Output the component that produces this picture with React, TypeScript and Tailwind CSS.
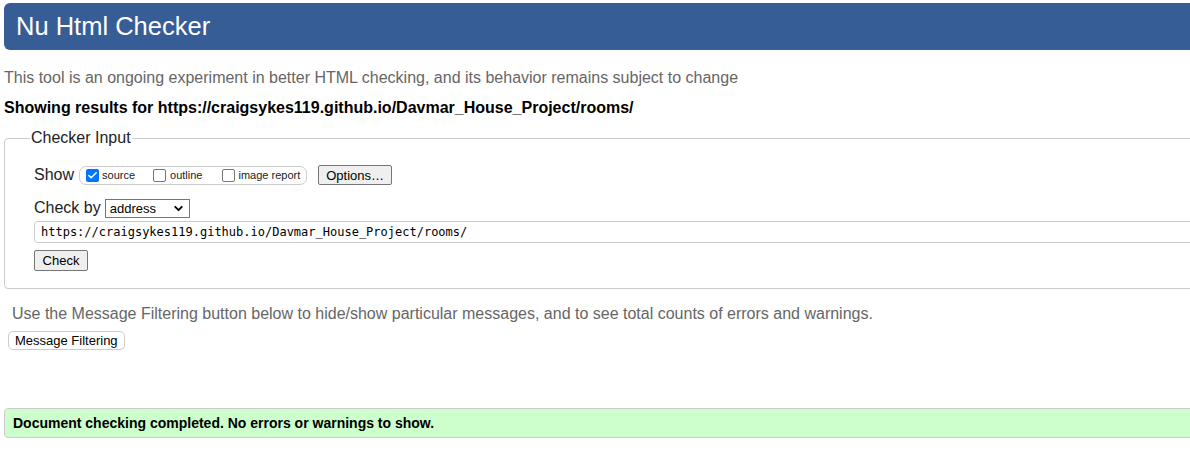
import { Check, ChevronDown } from 'lucide-react';

const FONT = "font-['Liberation_Sans',Arial,sans-serif]";

export default function App() {
  return (
    <div className={`h-[449px] w-full overflow-hidden bg-white ${FONT}`}>
      <div className="w-[1240px] px-[4px] pt-[3px]">
        {/* Header */}
        <div className="flex h-[47px] items-center rounded-l-[6px] bg-[#365d95] pl-[12px]">
          <h1 className="text-[25.5px] leading-none text-white">Nu Html Checker</h1>
        </div>

        <p className="mt-[18px] text-[16px] leading-[20px] text-[#666]">
          This tool is an ongoing experiment in better HTML checking, and its behavior remains subject to change
        </p>
        <p className="mt-[10px] text-[16px] font-bold leading-[20px] text-black">
          Showing results for https://craigsykes119.github.io/Davmar_House_Project/rooms/
        </p>

        {/* Checker Input */}
        <fieldset className="mt-[10px] rounded-l-[4px] border border-[#ccc] pb-[16px] pl-[29px] pt-[17px]">
          <legend className="-ml-[4px] px-[1px] text-[16px] leading-[20px] text-[#222]">Checker Input</legend>

          <div className="flex items-center">
            <span className="text-[16px] leading-[20px] text-[#222]">Show</span>
            <div className="ml-[5px] flex h-[19px] items-center rounded-[7px] border border-[#ccc] pl-[6px] pr-[6px]">
              <Box checked />
              <span className="ml-[3px] text-[11px] leading-none text-[#222]">source</span>
              <span className="ml-[18px]" />
              <Box />
              <span className="ml-[4px] text-[11px] leading-none text-[#222]">outline</span>
              <span className="ml-[20px]" />
              <Box />
              <span className="ml-[3px] text-[11px] leading-none text-[#222]">image report</span>
            </div>
            <button className="ml-[11px] h-[20px] rounded-[2px] border border-[#767676] bg-[#efefef] px-[7px] text-[13px] leading-none text-black">
              Options…
            </button>
          </div>

          <div className="mt-[13px] flex items-center">
            <span className="text-[16px] leading-[20px] text-[#222]">Check by</span>
            <div className="ml-[4px] flex h-[19px] w-[85px] items-center justify-between border border-[#767676] bg-white pl-[4px] pr-[4px]">
              <span className="text-[13px] leading-none text-black">address</span>
              <ChevronDown size={13} strokeWidth={3.5} className="text-black" />
            </div>
          </div>

          <div className="mt-[3px] flex h-[22px] items-center rounded-l-[4px] border border-[#ccc] pl-[6px]">
            <span className="font-['DejaVu_Sans_Mono','Liberation_Mono',monospace] text-[12px] leading-none text-black">
              https://craigsykes119.github.io/Davmar_House_Project/rooms/
            </span>
          </div>

          <button className="mt-[7px] h-[21px] w-[54px] rounded-[2px] border border-[#767676] bg-[#efefef] text-[13px] leading-none text-black">
            Check
          </button>
        </fieldset>

        <p className="mt-[15px] pl-[8px] text-[16px] leading-[20px] text-[#666]">
          Use the Message Filtering button below to hide/show particular messages, and to see total counts of errors and warnings.
        </p>
        <button className="ml-[4px] mt-[7px] h-[19px] rounded-[5px] border border-[#ccc] bg-white px-[6px] text-[13px] leading-none text-black">
          Message Filtering
        </button>

        {/* Result */}
        <div className="mt-[56px] flex h-[30px] items-center rounded-l-[4px] border border-[#ccc] bg-[#ccffcc] pl-[8px]">
          <span className="text-[14px] font-bold leading-none text-black">
            Document checking completed. No errors or warnings to show.
          </span>
        </div>
      </div>
    </div>
  );
}

function Box({ checked = false }: { checked?: boolean }) {
  if (checked) {
    return (
      <span className="flex h-[13px] w-[13px] items-center justify-center rounded-[2px] bg-[#0075ff]">
        <Check size={11} strokeWidth={3.5} className="text-white" />
      </span>
    );
  }
  return <span className="h-[13px] w-[13px] rounded-[2px] border border-[#767676] bg-white" />;
}
